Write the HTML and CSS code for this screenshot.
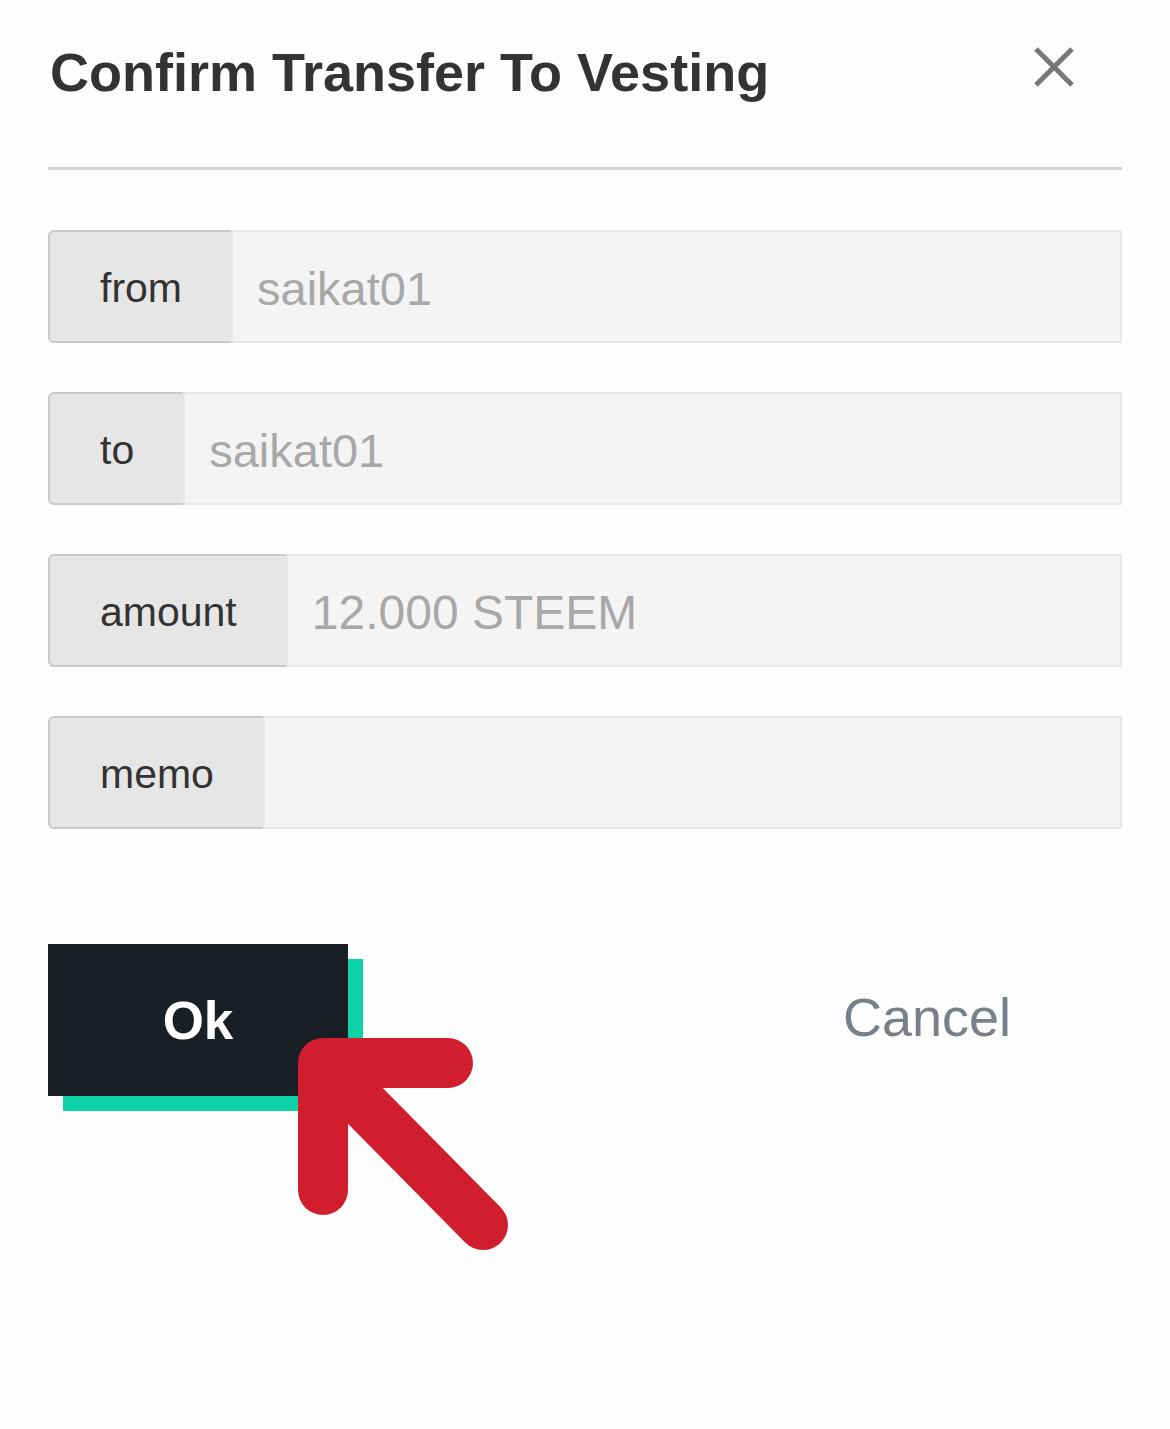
FILE: index.html
```html
<!DOCTYPE html>
<html>
<head>
<meta charset="utf-8">
<link rel="stylesheet" href="styles.css">
</head>
<body>
<div class="modal">
  <div class="header">
    <h1 class="title">Confirm Transfer To Vesting</h1>
    <button class="close" aria-label="Close">
      <svg width="40" height="40" viewBox="0 0 40 40"><path d="M2 2 L38 38 M38 2 L2 38" stroke="#777" stroke-width="5" fill="none"/></svg>
    </button>
  </div>
  <div class="divider"></div>
  <div class="rows">
    <div class="row"><span class="label">from</span><span class="value">saikat01</span></div>
    <div class="row"><span class="label">to</span><span class="value">saikat01</span></div>
    <div class="row"><span class="label">amount</span><span class="value amount">12.000 STEEM</span></div>
    <div class="row"><span class="label">memo</span><span class="value"></span></div>
  </div>
  <div class="actions">
    <button class="ok">Ok</button>
    <button class="cancel">Cancel</button>
  </div>
</div>
<svg class="arrow" width="260" height="260" viewBox="0 0 260 260">
  <path d="M53 180 L53 53 L178 53 M53 53 L213 215" stroke="#d01e2e" stroke-width="50" stroke-linecap="round" stroke-linejoin="round" fill="none"/>
</svg>
</body>
</html>
```
FILE: styles.css
```css
html, body {
  margin: 0;
  padding: 0;
  background: #fdfdfd;
}
body {
  font-family: "Liberation Sans", Arial, sans-serif;
  width: 1170px;
  height: 1429px;
  position: relative;
  overflow: hidden;
}
.modal {
  padding: 40px 48px 0 48px;
}
.header {
  display: flex;
  justify-content: space-between;
  align-items: flex-start;
  height: 127px;
}
.title {
  margin: 0 0 0 2px;
  font-size: 54px;
  line-height: 65px;
  font-weight: 700;
  color: #333;
}
.close {
  border: 0;
  background: none;
  padding: 0;
  margin: 7px 48px 0 0;
  width: 40px;
  height: 40px;
  display: block;
}
.close svg { display: block; }
.divider {
  height: 3px;
  background: #d2d2d2;
}
.rows {
  display: flex;
  flex-direction: column;
  gap: 49px;
  margin-top: 60px;
}
.row {
  display: flex;
  height: 113px;
}
.label {
  display: flex;
  align-items: center;
  padding: 3px 49px 0 50px;
  background: #e6e6e6;
  border: 2px solid #cacaca;
  border-right: 0;
  border-radius: 6px 0 0 6px;
  font-size: 41px;
  color: #333;
}
.value {
  flex: 1;
  display: flex;
  align-items: center;
  padding: 3px 0 0 24px;
  background: #f4f4f4;
  border: 2px solid #e8e8e8;
  font-size: 47px;
  color: #a8a8a8;
}
.value.amount {
  font-size: 48px;
}
.actions {
  display: flex;
  align-items: center;
  margin-top: 115px;
  height: 152px;
}
.ok {
  width: 300px;
  height: 152px;
  background: #1a1f25;
  color: #fff;
  border: 0;
  font-family: "Liberation Sans", Arial, sans-serif;
  font-weight: 700;
  font-size: 53px;
  box-shadow: 15px 15px 0 #0fd3a8;
  padding: 0;
}
.cancel {
  margin-left: 495px;
  margin-top: -6px;
  background: none;
  border: 0;
  padding: 0;
  font-family: "Liberation Sans", Arial, sans-serif;
  font-size: 54px;
  color: #7a8088;
}
.arrow {
  position: absolute;
  left: 270px;
  top: 1010px;
}
```
